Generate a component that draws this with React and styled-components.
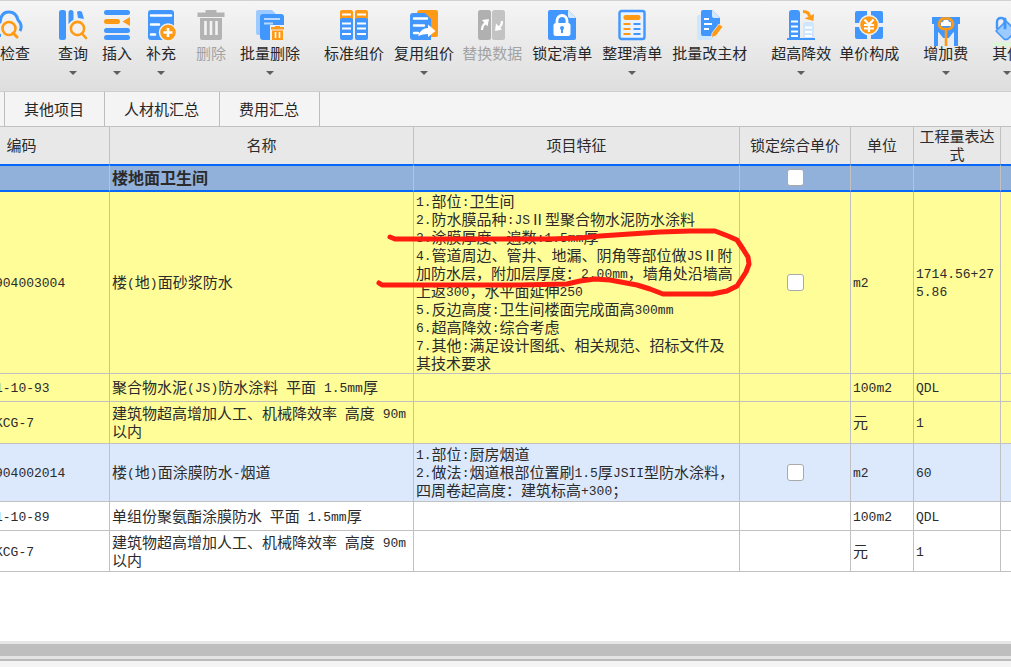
import React from 'react';
import styled, { createGlobalStyle, css } from 'styled-components';

const BLUE = '#4197fd';
const ORANGE = '#ff9a16';
const GRID = '#c1c1c1';
const SELECT = '#0768fa';

const GlobalStyle = createGlobalStyle`
  *, *::before, *::after { box-sizing: border-box; }
  body {
    margin: 0;
    overflow-x: hidden;
    background: #ffffff;
    color: #2b2b2b;
    font-family: 'Noto Sans CJK SC', sans-serif;
    font-size: 15px;
  }
`;

const Page = styled.div`
  display: flex;
  flex-direction: column;
  min-height: 100vh;
  overflow: hidden;
`;

const Toolbar = styled.div`
  display: flex;
  align-items: flex-start;
  height: 91px;
  margin-left: -15px;
  padding-top: 9px;
  border-top: 1px solid #d2d2d2;
  background: linear-gradient(#f5f5f5, #dedede);
`;

const ToolButton = styled.button`
  display: flex;
  flex: none;
  flex-direction: column;
  align-items: center;
  margin: 0 0 0 ${(p) => p.$gap}px;
  padding: 0;
  border: 0;
  background: none;
  color: #262626;
  font: inherit;
  &:disabled { color: #a3a3a3; }
`;

const ToolLabel = styled.span`
  margin-top: 3px;
  line-height: 20px;
  white-space: nowrap;
`;

const Caret = styled.span`
  margin-top: 8px;
  border: 4px solid transparent;
  border-top-color: #5e5e5e;
  border-bottom: 0;
`;

const ToolIcon = styled.svg`
  display: block;
  width: 30px;
  height: 30px;
  overflow: visible;
`;

const TabBar = styled.div`
  display: flex;
  height: 35px;
  padding-left: 4px;
  border-top: 1px solid #cecece;
  background: #f4f4f4;
`;

const Tab = styled.button`
  margin: 0;
  padding: 0 20px 0 19px;
  border: 0;
  border-right: 1px solid #bdbdbd;
  background: none;
  color: #262626;
  font: inherit;
  line-height: 20px;
  &:first-child { border-left: 1px solid #bdbdbd; }
`;

const Sheet = styled.div`
  position: relative;
  flex: 1;
  margin-left: -10px;
`;

const Table = styled.table`
  width: 100%;
  table-layout: fixed;
  border-spacing: 0;
  border-top: 1px solid ${GRID};
  line-height: 18px;
`;

const Col = styled.col`
  width: ${(p) => (p.$width ? `${p.$width}px` : 'auto')};
`;

const HeadCell = styled.th`
  height: 37px;
  padding: 0 0 1px;
  padding-right: ${(p) => (p.$first ? 56 : 0)}px;
  border-right: 1px solid ${GRID};
  background: #e8e8e8;
  font-weight: 400;
  text-align: center;
  &:last-child { border-right: 0; }
`;

const tones = { yellow: '#fffd98', blue: '#dce9fd', white: '#ffffff' };

const Row = styled.tr`
  height: ${(p) => p.$height}px;
  background: ${(p) => tones[p.$tone]};
  ${(p) =>
    p.$selected &&
    css`
      background: #91b1db;
      font-size: 16px;
      font-weight: 700;
      & > td {
        padding-bottom: 2px;
        border-top: 2px solid ${SELECT};
        border-bottom: 2px solid ${SELECT};
      }
    `}
`;

const Cell = styled.td`
  padding: 0 0 1px 2px;
  border-right: 1px solid ${GRID};
  border-bottom: 1px solid ${GRID};
  vertical-align: middle;
  white-space: pre;
  &:first-child { padding-left: 5px; }
  &:last-child { border-right: 0; }
`;

const CheckCell = styled(Cell)`
  padding-left: 0;
  text-align: center;
`;

const Latin = styled.span`
  font-family: 'Liberation Mono', monospace;
  font-size: 13px;
  line-height: 0;
  vertical-align: 1px;
`;

const Check = styled.input`
  appearance: none;
  display: block;
  width: 17px;
  height: 17px;
  margin: 0 auto;
  border: 1px solid #a9a9a9;
  border-radius: 3px;
  background: #ffffff;
`;

const Markup = styled.svg`
  position: absolute;
  top: 100px;
  left: 380px;
  width: 390px;
  height: 80px;
  pointer-events: none;
`;

const ScrollTrack = styled.div`
  height: 18px;
  border-top: 3px solid #e6e6e6;
  border-bottom: 3px solid #e3e3e3;
  background: #bebebe;
`;

const StatusBar = styled.div`
  height: 8px;
  border-top: 2px solid #bababa;
  background: #f4f4f4;
`;

const Lens = () => (
  <g fill="none" stroke={ORANGE} strokeWidth="2.6">
    <circle cx="19.5" cy="18.5" r="6.6" stroke="#f1f1f1" strokeWidth="6" />
    <circle cx="19.5" cy="18.5" r="6.6" fill="#f1f1f1" />
    <path d="M24 23.5l4 4.500" strokeLinecap="round" />
  </g>
);

const icons = {
  cloud: (
    <>
      <path
        d="M8 25.500Q1 25 1 19Q1 13 7 12Q8 2 16 2Q23 2 25 10Q30 15 27 21"
        fill="none" stroke={BLUE} strokeWidth="3"
      />
      <circle cx="16" cy="18.500" r="6.500" fill="#f0f0f0" stroke={ORANGE} strokeWidth="2.6" />
      <path d="M20 23l4 4" stroke={ORANGE} strokeWidth="3" strokeLinecap="round" />
    </>
  ),
  query: (
    <>
      <rect x="1" y="0" width="7" height="30" rx="2.500" fill={BLUE} />
      <path d="M10.500 2.500a2.500 2.500 0 015 0V10l-5 4zM19 2a3 2.500 0 015 0l2 7-6-1z" fill={BLUE} />
      <Lens />
    </>
  ),
  insert: (
    <>
      <g fill={BLUE}>
        <rect x="2" y="0" width="26" height="5" rx="2.500" />
        <rect x="2" y="18" width="26" height="5" rx="2.500" />
        <rect x="2" y="25" width="26" height="5" rx="2.500" />
      </g>
      <rect x="2" y="9" width="16" height="5" rx="2.500" fill={ORANGE} />
      <path d="M20.500 11.500L28 7v9z" fill={ORANGE} />
    </>
  ),
  supplement: (
    <>
      <rect x="2" y="0" width="26" height="30" rx="3" fill={BLUE} />
      <path d="M5 5.500h20M5 14.500h8M5 24.500h4" stroke="#fff" strokeWidth="2.500" strokeLinecap="round" />
      <circle cx="22" cy="22.500" r="8.500" fill={ORANGE} stroke="#eee" strokeWidth="1.500" />
      <path d="M22 18v9M17.500 22.500h9" stroke="#fff" strokeWidth="2.600" />
    </>
  ),
  trash: (
    <>
      <path d="M1.500 2.500h8V0h11v2.500h8V7h-27zM4 8h22v20q0 2-2 2H6q-2 0-2-2z" fill="#b3b3b3" />
      <path d="M9.500 11v14M15 11v14M20.500 11v14" stroke="#f3f3f3" strokeWidth="2.600" />
    </>
  ),
  batchDelete: (
    <>
      <path d="M3 0h14l5 5v20H3q-2 0-2-2V2q0-2 2-2z" fill="#9dcbff" />
      <rect x="5" y="4" width="24" height="26" rx="3" fill={BLUE} />
      <path d="M9 9h16M9 13.500h9" stroke="#b9dbff" strokeWidth="1.800" />
      <path d="M15 15h14v15H15z" fill="#eef2f6" />
      <path d="M16 17h4v-1h5v1h4v2.500H16zM17 20.500h11V30H17z" fill={ORANGE} />
      <path d="M20.500 22v6M24.500 22v6" stroke="#fff" strokeWidth="1.600" />
    </>
  ),
  pricing: (
    <>
      {[1, 16].map((x) => (
        <g key={x}>
          <path d={`M${x} 10V2q0-2 2-2h9q2 0 2 2v8z`} fill={ORANGE} />
          <path d={`M${x} 9l2-1h9l2 1v19q0 2-2 2h-9q-2 0-2-2z`} fill={BLUE} />
          <path d={`M${x + 2} 4.500h9M${x + 2} 13.500h9M${x + 2} 18.500h9M${x + 2} 24h9`} stroke="#fff" strokeWidth="2" />
        </g>
      ))}
    </>
  ),
  reuse: (
    <>
      <path d="M8 3q0-3 3-3h16q2 0 2 2v23q0 2-2 2H8z" fill={ORANGE} />
      <path d="M4 3h12l6 6v21H4q-3 0-3-3V6q0-3 3-3z" fill={BLUE} />
      <path d="M5 8.500h13M5 15.500h10M5 23h4" stroke="#fff" strokeWidth="2.400" strokeLinecap="round" />
      <path d="M9 26q3-8 10-8v-3.500l7.500 6.500-7.500 6v-3q-5 0-10 2z" fill="#fff" />
    </>
  ),
  replace: (
    <>
      <rect x="1" y="0" width="13" height="30" rx="2.500" fill="#b0b0b0" />
      <rect x="15" y="0" width="13" height="30" rx="2.500" fill="#c3c3c3" />
      <path d="M5 20q0-5 4-7M25 11q0 5-4 7" fill="none" stroke="#fff" strokeWidth="2.200" />
      <path d="M5 10l7-1-1.500 7.500zM18 21l1-7.500 6 6z" fill="#fff" />
    </>
  ),
  lock: (
    <>
      <path d="M3 0h18l8 8v20q0 2-2 2H3q-2 0-2-2V2q0-2 2-2z" fill={BLUE} />
      <path d="M21 0v6q0 2 2 2h6z" fill="#d8ebff" />
      <path d="M10 14v-3.500a5 5 0 0110 0V14" fill="none" stroke="#fff" strokeWidth="2.800" />
      <rect x="6.500" y="13" width="17" height="13" rx="2.500" fill="#fff" />
      <circle cx="15" cy="18" r="2" fill={BLUE} />
      <path d="M15 18v5" stroke={BLUE} strokeWidth="2" />
    </>
  ),
  arrange: (
    <>
      <rect x="2.500" y="1" width="25" height="28" rx="2" fill="#e9f3ff" stroke={BLUE} strokeWidth="2.400" />
      <rect x="6.500" y="5" width="17" height="5" rx="2" fill={ORANGE} />
      <path d="M6.500 14h7M6.500 19h7M6.500 24h7" stroke={ORANGE} strokeWidth="2.200" />
      <path d="M16.500 14h7M16.500 19h7M16.500 24h7" stroke={BLUE} strokeWidth="2.200" />
    </>
  ),
  material: (
    <>
      <rect x="2" y="5" width="16" height="25" rx="2" fill="#cfe6ff" />
      <path d="M8 0h9l8 8v10l-7 8H8q-2 0-2-2V2q0-2 2-2z" fill={BLUE} />
      <path d="M17 0v6q0 2 2 2h6z" fill="#d2e8ff" />
      <path d="M9 9h5M9 14h8M9 19h5" stroke="#fff" strokeWidth="2.200" />
      <path d="M24 14l4 2.500-7 9.500-4.500 1.500.500-4.500z" fill={ORANGE} stroke="#eee" strokeWidth=".8" />
    </>
  ),
  height: (
    <>
      <path d="M3 28V3q0-3 3-3h5q3 0 3 3v25h15v2H1v-2z" fill={BLUE} />
      <path d="M5 11.500h7M5 16.500h7M5 21.500h7M5 26h7" stroke="#fff" strokeWidth="2" />
      <rect x="17" y="12" width="11" height="16" rx="2" fill="#cfe6ff" />
      <path d="M19 17.500h7M19 22h7M19 26h7" stroke="#fff" strokeWidth="2" />
      <path d="M17 1.500q6 0 6.500 5" fill="none" stroke={ORANGE} strokeWidth="3" />
      <path d="M18.500 8.500l9.500-4.500-.5 7z" fill={ORANGE} />
    </>
  ),
  compose: (
    <>
      <path d="M3 1h10v5L6 13H1V3q0-2 2-2zM17 1h10q2 0 2 2v10h-5l-7-7zM1 17h5l7 7v5H3q-2 0-2-2zM24 17h5v10q0 2-2 2H17v-5z" fill={BLUE} />
      <circle cx="15" cy="15" r="9.500" fill={ORANGE} stroke="#f1f1f1" strokeWidth="1.500" />
      <path d="M10.500 9.500l4.500 5 4.500-5M15 14v8M10 15h10M10 18.500h10" fill="none" stroke="#fff" strokeWidth="2.200" />
    </>
  ),
  surcharge: (
    <g transform="translate(0 7)">
      <path d="M1 0h28v7h-2v22h-4V15l-5 6h-6l-5-6v14H3V7H1z" fill={BLUE} />
      <path d="M7.500 15l6 8v6h-6zM22.500 15l-6 8v6h6z" fill="#e8ebef" />
      <path d="M12 1.500h6q4 2 4 6 0 3-4 4.500h-6q-4-1.500-4-4.500 0-4 4-6z" fill={BLUE} stroke={ORANGE} strokeWidth="2.600" />
      <path d="M13 3h4q.5 2 3 2.500V9H10V5.500q2.500-.5 3-2.500z" fill="#fff" />
      <path d="M15 29V12" stroke={ORANGE} strokeWidth="2.600" />
    </g>
  ),
  bucket: (
    <g transform="translate(-1 7)">
      <path d="M6 12V5q0-4 4-4t4 4v5" fill="none" stroke={BLUE} strokeWidth="2.400" />
      <path d="M5 14L15 4l10 10-8 8q-2 1-4 0z" fill="#9ccbff" stroke={BLUE} strokeWidth="1.600" strokeLinejoin="round" />
      <path d="M14 2v9" stroke={BLUE} strokeWidth="3" strokeLinecap="round" />
      <path d="M1 25.500h28v3.500H1z" fill="#ddf6d6" />
    </g>
  ),
};

const tools = [
  { label: '云检查', icon: 'cloud', gap: 0 },
  { label: '查询', icon: 'query', gap: 28, menu: true },
  { label: '插入', icon: 'insert', gap: 14, menu: true },
  { label: '补充', icon: 'supplement', gap: 14, menu: true },
  { label: '删除', icon: 'trash', gap: 20, disabled: true },
  { label: '批量删除', icon: 'batchDelete', gap: 14, menu: true },
  { label: '标准组价', icon: 'pricing', gap: 24 },
  { label: '复用组价', icon: 'reuse', gap: 10, menu: true },
  { label: '替换数据', icon: 'replace', gap: 8, disabled: true },
  { label: '锁定清单', icon: 'lock', gap: 10 },
  { label: '整理清单', icon: 'arrange', gap: 10, menu: true },
  { label: '批量改主材', icon: 'material', gap: 10 },
  { label: '超高降效', icon: 'height', gap: 24, menu: true },
  { label: '单价构成', icon: 'compose', gap: 8 },
  { label: '增加费', icon: 'surcharge', gap: 24, menu: true },
  { label: '其他', icon: 'bucket', gap: 24, menu: true },
];

const columns = [
  { title: '编码', width: 120 },
  { title: '名称', width: 304 },
  { title: '项目特征', width: 326 },
  { title: '锁定综合单价', width: 111 },
  { title: '单位', width: 63 },
  { title: '工程量表达式', width: 87 },
  { title: '' },
];

const rows = [
  { name: '楼地面卫生间', height: 28, selected: true, check: true },
  {
    code: '904003004',
    name: '楼(地)面砂浆防水',
    feature: [
      '1.部位:卫生间',
      '2.防水膜品种:JSⅡ型聚合物水泥防水涂料',
      '3.涂膜厚度、遍数:1.5mm厚',
      '4.管道周边、管井、地漏、阴角等部位做JSⅡ附',
      '加防水层，附加层厚度：2.00mm，墙角处沿墙高',
      '上返300，水平面延伸250',
      '5.反边高度:卫生间楼面完成面高300mm',
      '6.超高降效:综合考虑',
      '7.其他:满足设计图纸、相关规范、招标文件及',
      '其技术要求',
    ].join('\n'),
    unit: 'm2',
    expr: '1714.56+27\n5.86',
    height: 182,
    tone: 'yellow',
    check: true,
  },
  { code: '1-10-93', name: '聚合物水泥(JS)防水涂料 平面 1.5mm厚', unit: '100m2', expr: 'QDL', height: 28, tone: 'yellow' },
  { code: 'KCG-7', name: '建筑物超高增加人工、机械降效率 高度 90m\n以内', unit: '元', expr: '1', height: 42, tone: 'yellow' },
  {
    code: '904002014',
    name: '楼(地)面涂膜防水-烟道',
    feature: '1.部位:厨房烟道\n2.做法:烟道根部位置刷1.5厚JSII型防水涂料，\n四周卷起高度：建筑标高+300；',
    unit: 'm2',
    expr: '60',
    height: 58,
    tone: 'blue',
    check: true,
  },
  { code: '1-10-89', name: '单组份聚氨酯涂膜防水 平面 1.5mm厚', unit: '100m2', expr: 'QDL', height: 29, tone: 'white' },
  { code: 'KCG-7', name: '建筑物超高增加人工、机械降效率 高度 90m\n以内', unit: '元', expr: '1', height: 41, tone: 'white' },
];

function Mixed({ children = '' }) {
  return children
    .split(/([\x20-\x7e]+)/)
    .map((part, i) => (i % 2 ? <Latin key={i}>{part}</Latin> : part));
}

export default function App() {
  return (
    <Page>
      <GlobalStyle />
      <Toolbar>
        {tools.map((t) => (
          <ToolButton key={t.label} type="button" $gap={t.gap} disabled={t.disabled}>
            <ToolIcon viewBox="0 0 30 30" aria-hidden="true">{icons[t.icon]}</ToolIcon>
            <ToolLabel>{t.label}</ToolLabel>
            {t.menu && <Caret />}
          </ToolButton>
        ))}
      </Toolbar>
      <TabBar>
        <Tab type="button">其他项目</Tab>
        <Tab type="button">人材机汇总</Tab>
        <Tab type="button">费用汇总</Tab>
      </TabBar>
      <Sheet>
        <Table>
          <colgroup>
            {columns.map((c) => <Col key={c.title} $width={c.width} />)}
          </colgroup>
          <thead>
            <tr>
              {columns.map((c, i) => <HeadCell key={c.title} scope="col" $first={i === 0}>{c.title}</HeadCell>)}
            </tr>
          </thead>
          <tbody>
            {rows.map((r, i) => (
              <Row key={i} $height={r.height} $tone={r.tone} $selected={r.selected}>
                <Cell><Mixed>{r.code}</Mixed></Cell>
                <Cell><Mixed>{r.name}</Mixed></Cell>
                <Cell><Mixed>{r.feature}</Mixed></Cell>
                <CheckCell>
                  {r.check && <Check type="checkbox" aria-label={`锁定综合单价 ${r.name}`} />}
                </CheckCell>
                <Cell><Mixed>{r.unit}</Mixed></Cell>
                <Cell><Mixed>{r.expr}</Mixed></Cell>
                <Cell />
              </Row>
            ))}
          </tbody>
        </Table>
        <Markup viewBox="370 226 390 80" aria-hidden="true">
          <path
            d="M390 237L395 239H550L580 238L600 236L630 234L660 232L690 231H715L728 236L737 240L743 249L748 257L749 264L746 272L737 286L727 291L712 294H663L650 289L637 285L610 280L595 279L580 281L567 284L520 285H382L379 283"
            fill="none" stroke="#ff1c10" strokeWidth="5" strokeLinecap="round" strokeLinejoin="round"
          />
        </Markup>
      </Sheet>
      <ScrollTrack />
      <StatusBar />
    </Page>
  );
}
